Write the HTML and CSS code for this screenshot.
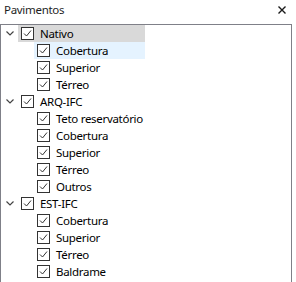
FILE: index.html
```html
<!DOCTYPE html>
<html>
<head>
<meta charset="utf-8">
<link rel="stylesheet" href="styles.css">
</head>
<body>
<div class="panel">
  <div class="header">
    <span class="title">Pavimentos</span>
    <svg class="close" width="8" height="8" viewBox="0 0 8 8"><path d="M0.5 0.5L7.5 7.5M7.5 0.5L0.5 7.5" stroke="#1a1a1a" stroke-width="1.4"/></svg>
  </div>
  <div class="tree">
    <div class="inner">
      <div class="row l0"><span class="chev"><svg width="8" height="5" viewBox="0 0 8 5"><path d="M0.5 0.5L4 4L7.5 0.5" fill="none" stroke="#444" stroke-width="1.2"/></svg></span><span class="item sel"><span class="cb"><svg width="11" height="11" viewBox="0 0 11 11"><path d="M2 5.5L4.5 8L9 2.5" fill="none" stroke="#333" stroke-width="1"/></svg></span><span class="lbl">Nativo</span></span></div>
      <div class="row l1"><span class="item hov"><span class="cb"><svg width="11" height="11" viewBox="0 0 11 11"><path d="M2 5.5L4.5 8L9 2.5" fill="none" stroke="#333" stroke-width="1"/></svg></span><span class="lbl">Cobertura</span></span></div>
      <div class="row l1"><span class="item"><span class="cb"><svg width="11" height="11" viewBox="0 0 11 11"><path d="M2 5.5L4.5 8L9 2.5" fill="none" stroke="#333" stroke-width="1"/></svg></span><span class="lbl">Superior</span></span></div>
      <div class="row l1"><span class="item"><span class="cb"><svg width="11" height="11" viewBox="0 0 11 11"><path d="M2 5.5L4.5 8L9 2.5" fill="none" stroke="#333" stroke-width="1"/></svg></span><span class="lbl">Térreo</span></span></div>
      <div class="row l0"><span class="chev"><svg width="8" height="5" viewBox="0 0 8 5"><path d="M0.5 0.5L4 4L7.5 0.5" fill="none" stroke="#444" stroke-width="1.2"/></svg></span><span class="item"><span class="cb"><svg width="11" height="11" viewBox="0 0 11 11"><path d="M2 5.5L4.5 8L9 2.5" fill="none" stroke="#333" stroke-width="1"/></svg></span><span class="lbl">ARQ-IFC</span></span></div>
      <div class="row l1"><span class="item"><span class="cb"><svg width="11" height="11" viewBox="0 0 11 11"><path d="M2 5.5L4.5 8L9 2.5" fill="none" stroke="#333" stroke-width="1"/></svg></span><span class="lbl">Teto reservatório</span></span></div>
      <div class="row l1"><span class="item"><span class="cb"><svg width="11" height="11" viewBox="0 0 11 11"><path d="M2 5.5L4.5 8L9 2.5" fill="none" stroke="#333" stroke-width="1"/></svg></span><span class="lbl">Cobertura</span></span></div>
      <div class="row l1"><span class="item"><span class="cb"><svg width="11" height="11" viewBox="0 0 11 11"><path d="M2 5.5L4.5 8L9 2.5" fill="none" stroke="#333" stroke-width="1"/></svg></span><span class="lbl">Superior</span></span></div>
      <div class="row l1"><span class="item"><span class="cb"><svg width="11" height="11" viewBox="0 0 11 11"><path d="M2 5.5L4.5 8L9 2.5" fill="none" stroke="#333" stroke-width="1"/></svg></span><span class="lbl">Térreo</span></span></div>
      <div class="row l1"><span class="item"><span class="cb"><svg width="11" height="11" viewBox="0 0 11 11"><path d="M2 5.5L4.5 8L9 2.5" fill="none" stroke="#333" stroke-width="1"/></svg></span><span class="lbl">Outros</span></span></div>
      <div class="row l0"><span class="chev"><svg width="8" height="5" viewBox="0 0 8 5"><path d="M0.5 0.5L4 4L7.5 0.5" fill="none" stroke="#444" stroke-width="1.2"/></svg></span><span class="item"><span class="cb"><svg width="11" height="11" viewBox="0 0 11 11"><path d="M2 5.5L4.5 8L9 2.5" fill="none" stroke="#333" stroke-width="1"/></svg></span><span class="lbl">EST-IFC</span></span></div>
      <div class="row l1"><span class="item"><span class="cb"><svg width="11" height="11" viewBox="0 0 11 11"><path d="M2 5.5L4.5 8L9 2.5" fill="none" stroke="#333" stroke-width="1"/></svg></span><span class="lbl">Cobertura</span></span></div>
      <div class="row l1"><span class="item"><span class="cb"><svg width="11" height="11" viewBox="0 0 11 11"><path d="M2 5.5L4.5 8L9 2.5" fill="none" stroke="#333" stroke-width="1"/></svg></span><span class="lbl">Superior</span></span></div>
      <div class="row l1"><span class="item"><span class="cb"><svg width="11" height="11" viewBox="0 0 11 11"><path d="M2 5.5L4.5 8L9 2.5" fill="none" stroke="#333" stroke-width="1"/></svg></span><span class="lbl">Térreo</span></span></div>
      <div class="row l1"><span class="item"><span class="cb"><svg width="11" height="11" viewBox="0 0 11 11"><path d="M2 5.5L4.5 8L9 2.5" fill="none" stroke="#333" stroke-width="1"/></svg></span><span class="lbl">Baldrame</span></span></div>
    </div>
  </div>
</div>
</body>
</html>
```

FILE: styles.css
```css
html, body {
  margin: 0;
  padding: 0;
  background: #ffffff;
  overflow: hidden;
}
body {
  font-family: "Noto Sans", "Liberation Sans", sans-serif;
  font-size: 11.5px;
  letter-spacing: -0.3px;
  color: #000;
}
.panel {
  width: 292px;
  height: 282px;
  display: flex;
  flex-direction: column;
}
.header {
  height: 24px;
  display: flex;
  align-items: center;
  justify-content: space-between;
  padding: 0 6px 4px 4px;
  box-sizing: border-box;
}
.title {
  color: #1e1e1e;
  line-height: 16px;
}
.close {
  display: block;
}
.tree {
  flex: 1;
  border: 1px solid #7f8088;
  border-bottom: none;
}
.inner {
  width: 144px;
}
.row {
  height: 17px;
  display: flex;
  align-items: stretch;
}
.row.l1 {
  padding-left: 33px;
}
.chev {
  width: 17px;
  display: flex;
  align-items: center;
  justify-content: center;
  padding-right: 1px;
  box-sizing: border-box;
}
.chev svg {
  display: block;
  margin-left: 1px;
}
.item {
  flex: 1;
  display: flex;
  align-items: center;
  padding-left: 3px;
}
.item.sel {
  background: #d9d9d9;
}
.item.hov {
  background: #e5f3ff;
}
.cb {
  width: 13px;
  height: 13px;
  box-sizing: border-box;
  border: 1px solid #333;
  background: #fff;
  display: flex;
  flex: 0 0 auto;
}
.cb svg {
  display: block;
}
.lbl {
  margin-left: 6px;
  line-height: 17px;
  white-space: nowrap;
}
```
